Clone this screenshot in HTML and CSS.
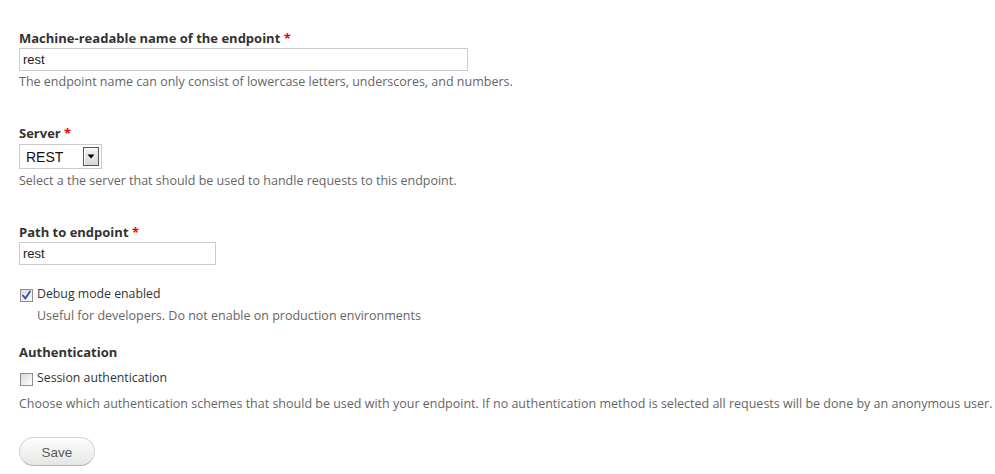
FILE: index.html
```html
<!DOCTYPE html>
<html>
<head>
<meta charset="utf-8">
<title>Endpoint</title>
<link rel="stylesheet" href="styles.css">
</head>
<body>
<form class="form">
  <div class="item item-first">
    <label class="label" for="name">Machine-readable name of the endpoint <span class="req">*</span></label>
    <input class="text text-wide" id="name" type="text" value="rest">
    <div class="desc">The endpoint name can only consist of lowercase letters, underscores, and numbers.</div>
  </div>

  <div class="item item-server">
    <label class="label" for="server">Server <span class="req">*</span></label>
    <div class="select-wrap">
      <select class="select" id="server"><option>REST</option></select>
      <span class="select-btn"><svg width="8" height="5" viewBox="0 0 8 5"><path d="M0.5 0.5h7L4 4.5z" fill="#000"/></svg></span>
    </div>
    <div class="desc desc-server">Select a the server that should be used to handle requests to this endpoint.</div>
  </div>

  <div class="item item-path">
    <label class="label" for="path">Path to endpoint <span class="req">*</span></label>
    <input class="text text-path" id="path" type="text" value="rest">
  </div>

  <div class="check-row check-debug">
    <span class="box checked"><svg width="11" height="11" viewBox="0 0 11 11"><path d="M2 5.5 L4.3 8.5 L9 1.5" fill="none" stroke="#2a4fbf" stroke-width="1.8" stroke-linejoin="round" stroke-linecap="round"/></svg></span>
    <span class="check-label">Debug mode enabled</span>
  </div>
  <div class="desc desc-indent">Useful for developers. Do not enable on production environments</div>

  <div class="label label-auth">Authentication</div>
  <div class="check-row check-session">
    <span class="box"></span>
    <span class="check-label">Session authentication</span>
  </div>
  <div class="desc desc-auth">Choose which authentication schemes that should be used with your endpoint. If no authentication method is selected all requests will be done by an anonymous user.</div>

  <button class="button" type="button">Save</button>
</form>
</body>
</html>
```
FILE: styles.css
```css
html, body {
  margin: 0;
  padding: 0;
  background: #fff;
  overflow: hidden;
}
.form {
  padding: 30px 0 0 19px;
  font-family: "Open Sans", "Noto Sans", sans-serif;
}
.item {
  display: flex;
  flex-direction: column;
  align-items: flex-start;
}
.label {
  display: block;
  font-weight: bold;
  font-size: 13px;
  line-height: 16px;
  color: #333;
}
.req {
  color: #e00;
}
.text {
  box-sizing: border-box;
  height: 23px;
  margin: 2px 0 0;
  padding: 2px 3px;
  border: 1px solid #ccc;
  font: 13px "Liberation Sans", Arial, sans-serif;
  color: #222;
  background: #fff;
  outline: none;
}
.text-wide { width: 449px; }
.text-path { width: 197px; }
.desc {
  font-size: 12.5px;
  line-height: 16px;
  color: #666;
  margin-top: 3px;
  white-space: nowrap;
}
.item-server { margin-top: 35px; }
.select-wrap {
  position: relative;
  margin-top: 3px;
  width: 83px;
  height: 25px;
}
.select {
  -webkit-appearance: none;
  appearance: none;
  box-sizing: border-box;
  width: 83px;
  height: 25px;
  margin: 0;
  padding: 0 0 0 6px;
  border: 1px solid #ccc;
  border-radius: 0;
  background: #fff;
  font: 14px "Liberation Sans", Arial, sans-serif;
  color: #111;
  outline: none;
}
.select-btn {
  position: absolute;
  top: 3px;
  right: 3px;
  box-sizing: border-box;
  width: 16px;
  height: 19px;
  border: 1px solid #555;
  background: linear-gradient(#f4f4f4, #d6d6d6);
  box-shadow: inset 1px 1px 0 #fff;
  display: flex;
  align-items: center;
  justify-content: center;
  pointer-events: none;
}
.desc-server { margin-top: 4px; }
.item-path { margin-top: 35px; }
.check-row {
  display: flex;
  align-items: flex-start;
  font-size: 12.3px;
  line-height: 16px;
  color: #333;
}
.check-debug { margin-top: 21px; }
.box {
  box-sizing: border-box;
  width: 13px;
  height: 13px;
  margin: 3px 4px 0 1px;
  border: 1px solid #8f8f8f;
  background: linear-gradient(135deg, #d9d9d4 0%, #f0f0ee 60%, #fff 100%);
  display: flex;
  align-items: center;
  justify-content: center;
}
.box svg { display: block; }
.desc-indent {
  margin-top: 6px;
  padding-left: 18px;
}
.label-auth { margin-top: 20px; }
.check-session { margin-top: 10px; }
.desc-auth { margin-top: 10px; }
.button {
  display: block;
  box-sizing: border-box;
  width: 76px;
  height: 29px;
  margin: 25px 0 0;
  padding: 2px 0 0;
  border: 1px solid #d4d4d4;
  border-bottom-color: #b4b4b4;
  border-radius: 15px;
  background: linear-gradient(#fefefe, #e6e6e6);
  font: 13.5px "Liberation Sans", Arial, sans-serif;
  color: #5a5a5a;
  cursor: pointer;
}
```
